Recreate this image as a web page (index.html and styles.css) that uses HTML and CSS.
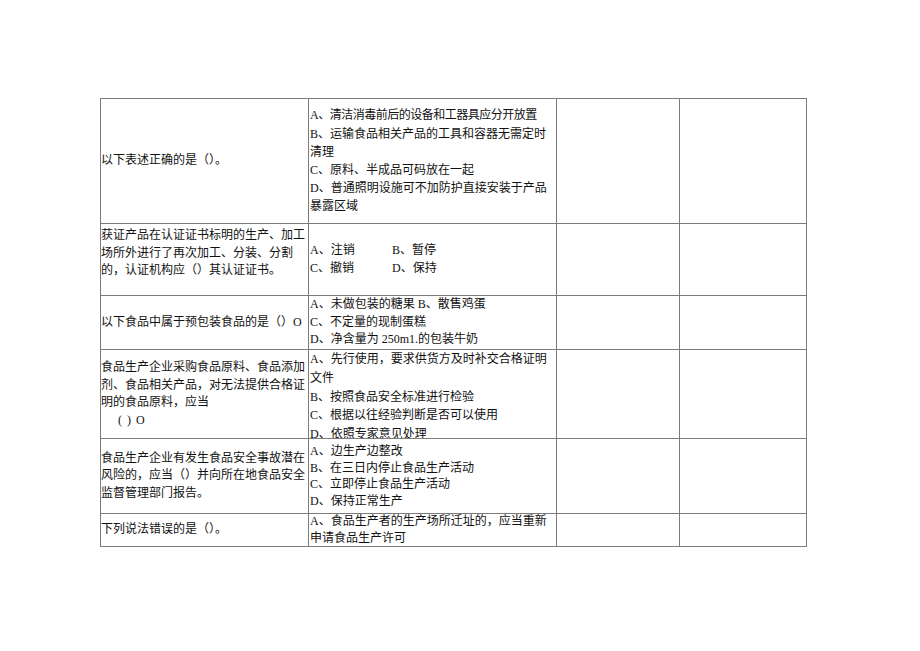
FILE: index.html
```html
<!DOCTYPE html>
<html lang="zh-CN">
<head>
<meta charset="utf-8">
<title>题目表</title>
<link rel="stylesheet" href="styles.css">
</head>
<body>
<div class="page">
  <div class="sheet">
    <div class="cell q"><div>以下表述正确的是（）。</div></div>
    <div class="cell opts lh18">
      <div class="tight">A、清洁消毒前后的设备和工器具应分开放置</div>
      <div>B、运输食品相关产品的工具和容器无需定时</div>
      <div>清理</div>
      <div>C、原料、半成品可码放在一起</div>
      <div>D、普通照明设施可不加防护直接安装于产品</div>
      <div>暴露区域</div>
    </div>
    <div class="cell"></div>
    <div class="cell"></div>

    <div class="cell q shift-up">
      <div>获证产品在认证证书标明的生产、加工</div>
      <div>场所外进行了再次加工、分装、分割</div>
      <div>的，认证机构应（）其认证证书。</div>
    </div>
    <div class="cell opts">
      <div><span class="pair">A、注销</span>B、暂停</div>
      <div><span class="pair">C、撤销</span>D、保持</div>
    </div>
    <div class="cell"></div>
    <div class="cell"></div>

    <div class="cell q"><div>以下食品中属于预包装食品的是（）O</div></div>
    <div class="cell opts">
      <div>A、未做包装的糖果 B、散售鸡蛋</div>
      <div>C、不定量的现制蛋糕</div>
      <div>D、净含量为 250m1.的包装牛奶</div>
    </div>
    <div class="cell"></div>
    <div class="cell"></div>

    <div class="cell q">
      <div>食品生产企业采购食品原料、食品添加</div>
      <div>剂、食品相关产品，对无法提供合格证</div>
      <div>明的食品原料，应当</div>
      <div class="indent">( )&nbsp;O</div>
    </div>
    <div class="cell opts top lh19">
      <div>A、先行使用，要求供货方及时补交合格证明</div>
      <div>文件</div>
      <div>B、按照食品安全标准进行检验</div>
      <div>C、根据以往经验判断是否可以使用</div>
      <div>D、依照专家意见处理</div>
    </div>
    <div class="cell"></div>
    <div class="cell"></div>

    <div class="cell q">
      <div>食品生产企业有发生食品安全事故潜在</div>
      <div>风险的，应当（）并向所在地食品安全</div>
      <div>监督管理部门报告。</div>
    </div>
    <div class="cell opts lh16">
      <div>A、边生产边整改</div>
      <div>B、在三日内停止食品生产活动</div>
      <div>C、立即停止食品生产活动</div>
      <div>D、保持正常生产</div>
    </div>
    <div class="cell"></div>
    <div class="cell"></div>

    <div class="cell q"><div>下列说法错误的是（）。</div></div>
    <div class="cell opts lh17">
      <div>A、食品生产者的生产场所迁址的，应当重新</div>
      <div>申请食品生产许可</div>
    </div>
    <div class="cell"></div>
    <div class="cell"></div>
  </div>
</div>
</body>
</html>
```

FILE: styles.css
```css
html, body {
  margin: 0;
  padding: 0;
  background: #ffffff;
}

.page {
  width: 920px;
  height: 651px;
  padding: 98px 0 0 100px;
  box-sizing: border-box;
}

.sheet {
  display: grid;
  grid-template-columns: 208px 248px 123px 127px;
  grid-template-rows: 125px 72px 54px 89px 75px 33px;
  width: 707px;
  border-top: 1px solid #7c7c7c;
  border-left: 1px solid #7c7c7c;
  box-sizing: border-box;
  font-family: "Liberation Serif", "Noto Sans CJK SC", serif;
  font-size: 12px;
  line-height: 17.5px;
  color: #111111;
}

.cell {
  border-right: 1px solid #7c7c7c;
  border-bottom: 1px solid #7c7c7c;
  overflow: hidden;
  display: flex;
  flex-direction: column;
  justify-content: center;
  white-space: nowrap;
  min-width: 0;
  min-height: 0;
}

.q {
  padding-left: 0;
}

.opts {
  padding-left: 1px;
}

.shift-up {
  padding-bottom: 12px;
}

.top {
  justify-content: flex-start;
}

.tight {
  letter-spacing: -0.5px;
}

.lh16 { line-height: 16.5px; }
.lh17 { line-height: 17px; }
.lh18 { line-height: 18.2px; }
.lh19 { line-height: 18.8px; }

.pair {
  display: inline-block;
  width: 82px;
}

.indent {
  padding-left: 17px;
  word-spacing: 2px;
}
```
